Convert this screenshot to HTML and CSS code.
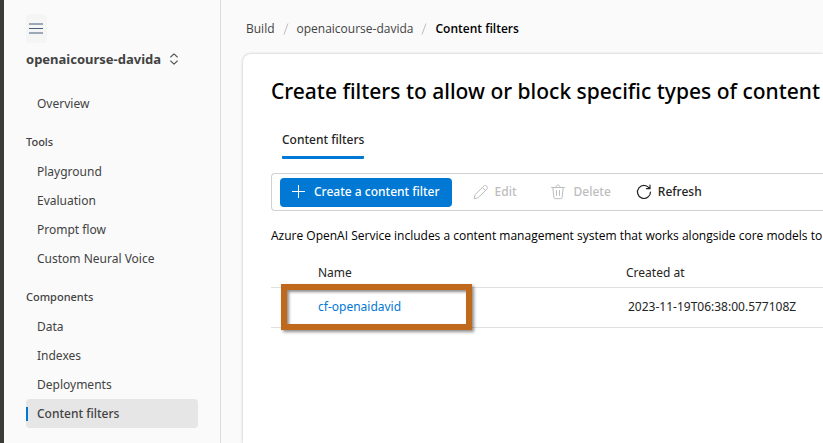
FILE: index.html
```html
<!DOCTYPE html>
<html lang="en">
<head>
<meta charset="utf-8">
<meta name="viewport" content="width=device-width, initial-scale=1">
<title>Content filters</title>
<link rel="stylesheet" href="styles.css">
</head>
<body>
<div class="app">
  <aside class="sidebar">
    <button class="menu-button" type="button" aria-label="Toggle navigation">
      <svg width="15" height="12" viewBox="0 0 15 12" fill="none"><path d="M0 1h14M0 10h14" stroke="#9aa8b7" stroke-width="2"/><path d="M0 5.500h14" stroke="#48607c"/></svg>
    </button>
    <button class="project" type="button">openaicourse-davida
      <svg width="8" height="12" viewBox="0 0 8 12" fill="none" stroke="#555" stroke-width="1.1" stroke-linejoin="round" stroke-linecap="round"><path d="M.7 4 4 .8 7.3 4M.7 8 4 11.2 7.3 8"/></svg>
    </button>
    <nav class="nav">
      <a class="nav-item" href="#">Overview</a>
      <h2 class="nav-heading">Tools</h2>
      <a class="nav-item" href="#">Playground</a>
      <a class="nav-item" href="#">Evaluation</a>
      <a class="nav-item" href="#">Prompt flow</a>
      <a class="nav-item" href="#">Custom Neural Voice</a>
      <h2 class="nav-heading">Components</h2>
      <a class="nav-item" href="#">Data</a>
      <a class="nav-item" href="#">Indexes</a>
      <a class="nav-item" href="#">Deployments</a>
      <a class="nav-item active" href="#" aria-current="page">Content filters</a>
    </nav>
  </aside>
  <div class="content">
    <nav class="breadcrumb" aria-label="Breadcrumb">
      <a href="#">Build</a>
      <svg width="6" height="12" viewBox="0 0 6 12" stroke="#bdbdbd"><path d="M5 .5 1 11.5"/></svg>
      <a href="#">openaicourse-davida</a>
      <svg width="6" height="12" viewBox="0 0 6 12" stroke="#bdbdbd"><path d="M5 .5 1 11.5"/></svg>
      <span class="current">Content filters</span>
    </nav>
    <main class="card">
      <h1>Create filters to allow or block specific types of content</h1>
      <div class="tabs" role="tablist">
        <button class="tab" type="button" role="tab" aria-selected="true">Content filters</button>
      </div>
      <div class="toolbar">
        <button class="tool primary" type="button">
          <svg width="14" height="14" viewBox="0 0 14 14" fill="none" stroke="currentColor"><path d="M6.5 0v13M0 6.5h13"/></svg>
          Create a content filter
        </button>
        <button class="tool edit" type="button" disabled>
          <svg width="16" height="16" viewBox="0 0 16 16" fill="none" stroke="currentColor" stroke-linejoin="round"><path d="M10.7 2.1c1.9-1.9 4.9 1 3.1 3L5.3 13.6l-4.2 1.2 1.1-4.2zM9.4 3.5l3 3"/></svg>
          Edit
        </button>
        <button class="tool delete" type="button" disabled>
          <svg width="16" height="16" viewBox="0 0 16 16" fill="none" stroke="currentColor" stroke-linecap="round" stroke-linejoin="round"><path d="M1.5 3.5h13M2.8 3.5l1.1 10q.2 1.2 1.3 1.2h5.6q1.1 0 1.3-1.2l1.1-10M6 3.3c0-3.2 4-3.2 4 0M6.5 6.5v5M9.5 6.5v5"/></svg>
          Delete
        </button>
        <button class="tool refresh" type="button">
          <svg width="16" height="16" viewBox="0 0 16 16" fill="none" stroke="currentColor" stroke-width="1.2" stroke-linecap="round" stroke-linejoin="round"><path d="M13.5 4.5A6.5 6.5 0 1 0 14.5 8M14 1.2v3.5h-3.5"/></svg>
          Refresh
        </button>
      </div>
      <p class="intro">Azure OpenAI Service includes a content management system that works alongside core models to</p>
      <table class="filters">
        <thead>
          <tr><th class="name" scope="col">Name</th><th class="created" scope="col">Created at</th></tr>
        </thead>
        <tbody>
          <tr>
            <td class="name"><a href="#">cf-openaidavid</a><span class="highlight"></span></td>
            <td class="created">2023-11-19T06:38:00.577108Z</td>
          </tr>
        </tbody>
      </table>
    </main>
  </div>
</div>
</body>
</html>
```
FILE: styles.css
```css
* { box-sizing: border-box; }

body {
  margin: 0;
  background: #fafafa;
  color: #242424;
  font: 12px/16px "Segoe UI", "Noto Sans", "Open Sans", sans-serif;
}

button { font: inherit; color: inherit; background: none; border: 0; padding: 0; }
a { color: inherit; text-decoration: none; }
svg { flex: none; }

.app {
  display: grid;
  grid-template-columns: 217px minmax(0, 1fr);
  min-height: 100vh;
  border-left: 4px solid #3b3a36;
}

.sidebar {
  padding: 14px 22px 0;
  border-right: 1px solid #dcdcdc;
  color: #424242;
}

.menu-button {
  display: flex;
  align-items: center;
  justify-content: center;
  width: 21px;
  height: 29px;
  border-radius: 4px;
  background: #f5f5f5;
}

.project {
  display: flex;
  align-items: center;
  gap: 9px;
  height: 20px;
  margin-top: 6px;
  font-size: 13px;
  font-weight: 700;
  white-space: nowrap;
}

.nav { margin-top: 20px; }

.nav-item {
  display: flex;
  align-items: center;
  position: relative;
  height: 29px;
  padding-left: 11px;
  border-radius: 4px;
}

.nav-heading {
  margin: 16px 0 7px;
  font-size: 11px;
  line-height: 16px;
  font-weight: 500;
}

.nav-item.active { background: #e6e6e6; font-weight: 500; }

.nav-item.active::before {
  content: "";
  position: absolute;
  left: 0;
  width: 2px;
  height: 14px;
  background: #0078d4;
}

.content { display: flex; flex-direction: column; }

.breadcrumb {
  display: flex;
  align-items: center;
  gap: 8px;
  padding: 21px 25px 17px;
  font-family: "Segoe UI", "Open Sans", sans-serif;
  color: #424242;
}

.current { color: #000; font-weight: 600; }

.card {
  flex: 1;
  margin-left: 22px;
  padding: 22px 0 0 28px;
  background: #fff;
  border-top-left-radius: 8px;
  box-shadow: 0 0 3px rgba(0, 0, 0, 0.25);
}

h1 {
  margin: 0;
  color: #000;
  font-size: 21px;
  line-height: 30px;
  font-weight: 500;
  white-space: nowrap;
}

.tabs { display: flex; padding: 26px 11px 14px; }

.tab {
  padding-bottom: 8px;
  border-bottom: 3px solid #0078d4;
  border-radius: 1px;
  font-weight: 500;
}

.toolbar {
  display: flex;
  align-items: center;
  height: 38px;
  padding-left: 8px;
  border: 1px solid #d1d1d1;
  border-right: 0;
  border-radius: 4px 0 0 4px;
}

.tool {
  display: flex;
  align-items: center;
  gap: 8px;
  height: 29px;
  font-weight: 500;
}

.tool:disabled { color: #bdbdbd; }

.primary {
  padding: 0 12px;
  border-radius: 4px;
  background: #0078d4;
  color: #fff;
}

.edit { margin-left: 21px; gap: 6px; }
.delete { margin-left: 33px; }
.refresh { margin-left: 25px; gap: 6px; }

.intro {
  margin: 17px 0 0;
  color: #000;
  font-family: "Segoe UI", "Open Sans", sans-serif;
  white-space: nowrap;
}

.filters {
  width: 100%;
  margin-top: 15px;
  border-collapse: collapse;
  table-layout: fixed;
}

.filters tr { border-bottom: 1px solid #e0e0e0; }
.filters th { height: 28px; font-weight: 400; text-align: left; }
.filters td { height: 40px; }
.filters th, .filters td { padding: 0; }
.filters .name { position: relative; width: 355px; padding-left: 47px; }
.filters td.created { padding-left: 2px; }
.filters a { color: #0078d4; }

.highlight {
  position: absolute;
  left: 10px;
  top: -4px;
  width: 191px;
  height: 46px;
  border: 6px solid #c0691c;
  box-shadow: 2px 2px 3px rgba(0, 0, 0, 0.45), inset 2px 2px 3px rgba(0, 0, 0, 0.45);
  pointer-events: none;
}
```
